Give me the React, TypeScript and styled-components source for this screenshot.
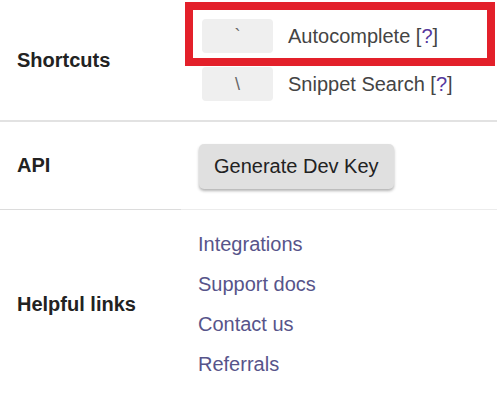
import styled, { createGlobalStyle } from "styled-components";

const GlobalStyle = createGlobalStyle`
    html, body {
        margin: 0;
        padding: 0;
        background: #ffffff;
    }
    body {
        font-family: "Liberation Sans", Arial, sans-serif;
        color: #222;
    }
`;

const shortcuts = [
    { key: "`", label: "Autocomplete", highlighted: true },
    { key: "\\", label: "Snippet Search", highlighted: false },
];

const links = ["Integrations", "Support docs", "Contact us", "Referrals"];

export default function App() {
    return (
        <>
            <GlobalStyle />
            <Table>
                <Row>
                    <Label $pad="12px">Shortcuts</Label>
                    <Content $pad="12px">
                        {shortcuts.map((s) => (
                            <Shortcut key={s.label} $highlighted={s.highlighted}>
                                <Kbd>{s.key}</Kbd>
                                <ShortcutText>
                                    {s.label} [<Help href="#">?</Help>]
                                </ShortcutText>
                            </Shortcut>
                        ))}
                    </Content>
                </Row>
                <Row>
                    <Label $pad="0" $border="2px solid #e2e2e2">API</Label>
                    <Content $pad="0" $border="2px solid #e2e2e2" $height="89px">
                        <DevKeyButton>Generate Dev Key</DevKeyButton>
                    </Content>
                </Row>
                <Row>
                    <Label $pad="14px" $border="1px solid #dcdcdc">Helpful links</Label>
                    <Content $pad="14px" $border="1px solid #ececec">
                        {links.map((l) => (
                            <LinkItem key={l} href="#">
                                {l}
                            </LinkItem>
                        ))}
                    </Content>
                </Row>
            </Table>
        </>
    );
}

const Table = styled.div`
    display: grid;
    grid-template-columns: 181px 1fr;
    width: 497px;
`;

const Row = styled.div`
    display: contents;
`;

const Label = styled.div<{ $pad: string; $border?: string }>`
    display: flex;
    align-items: center;
    padding: ${(p) => p.$pad} 0 ${(p) => p.$pad} 17px;
    border-top: ${(p) => p.$border || "none"};
    font-size: 20px;
    font-weight: bold;
    color: #222;
`;

const Content = styled.div<{ $pad: string; $border?: string; $height?: string }>`
    display: flex;
    flex-direction: column;
    justify-content: center;
    padding: ${(p) => p.$pad} 0 ${(p) => p.$pad} 17px;
    border-top: ${(p) => p.$border || "none"};
    height: ${(p) => p.$height || "auto"};
    box-sizing: border-box;
`;

const Shortcut = styled.div<{ $highlighted: boolean }>`
    position: relative;
    display: flex;
    align-items: center;
    gap: 15px;
    height: 48px;
    padding-left: 4px;
    &::after {
        content: "";
        display: ${(p) => (p.$highlighted ? "block" : "none")};
        position: absolute;
        top: -10px;
        left: -13px;
        right: 2px;
        bottom: -6px;
        border: 8px solid #e3202a;
        box-sizing: border-box;
        pointer-events: none;
    }
`;

const Kbd = styled.span`
    display: flex;
    align-items: center;
    justify-content: center;
    width: 71px;
    height: 34px;
    border-radius: 4px;
    background: #efefef;
    color: #666;
    font-size: 18px;
`;

const ShortcutText = styled.span`
    font-size: 20px;
    color: #444;
`;

const Help = styled.a`
    color: #56389e;
    text-decoration: none;
`;

const DevKeyButton = styled.button`
    align-self: flex-start;
    margin-left: 1px;
    margin-top: 2px;
    height: 45px;
    padding: 0 15px;
    border: none;
    border-radius: 5px;
    background: #e0e0e0;
    box-shadow: 0 2px 3px rgba(0, 0, 0, 0.3);
    font-family: "Liberation Sans", Arial, sans-serif;
    font-size: 20px;
    color: #222;
    cursor: pointer;
`;

const LinkItem = styled.a`
    display: flex;
    align-items: center;
    height: 40px;
    font-size: 20px;
    color: #57548a;
    text-decoration: none;
`;
